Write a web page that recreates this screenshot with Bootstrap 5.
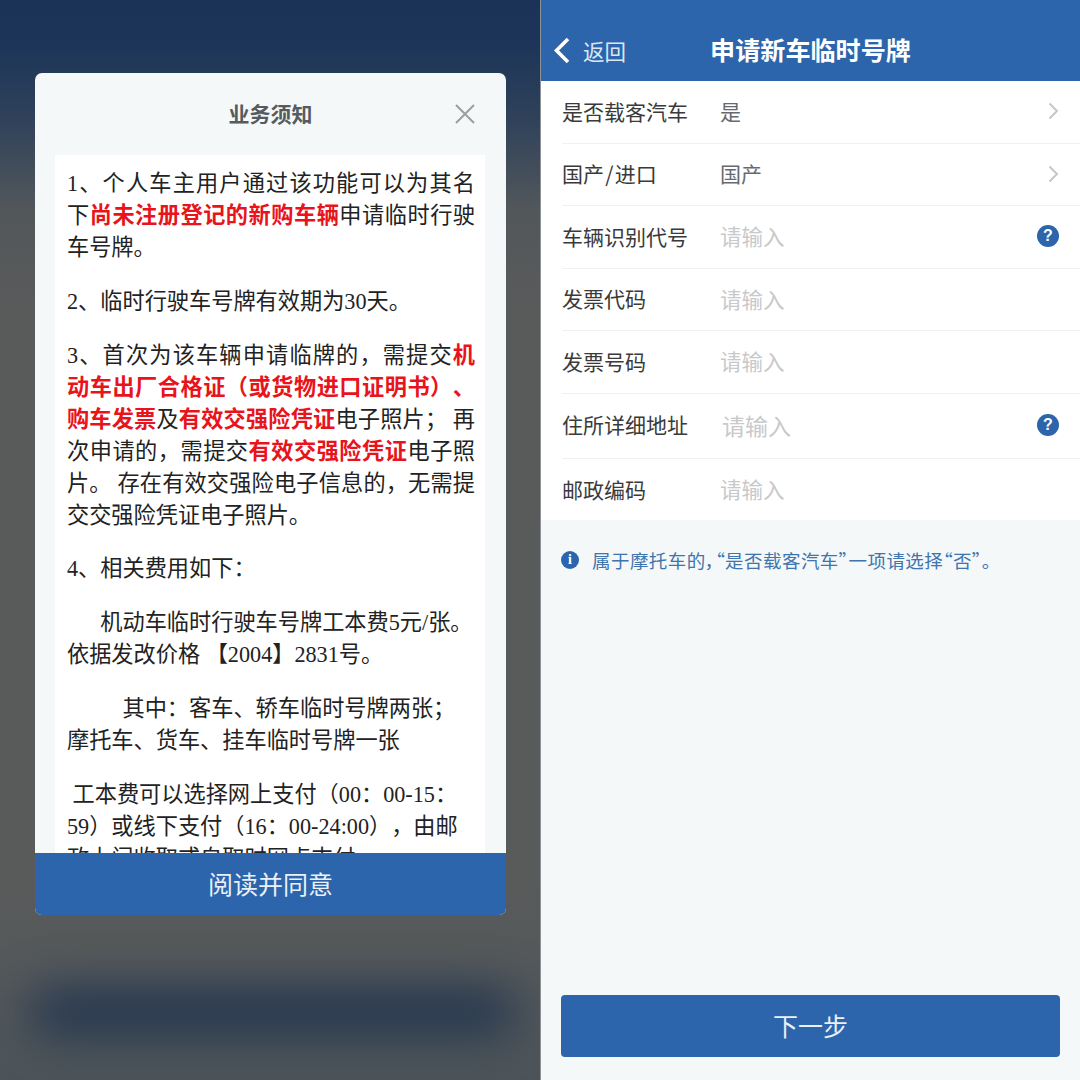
<!DOCTYPE html>
<html lang="zh-CN">
<head>
<meta charset="utf-8">
<title>申请新车临时号牌</title>
<link rel="stylesheet" href="https://cdn.jsdelivr.net/npm/bootstrap@5.3.0/dist/css/bootstrap.min.css">
<style>
html,body{width:1080px;height:1080px;overflow:hidden;background:#5a5a5a;font-family:"Noto Sans CJK SC",sans-serif}
.stage{width:1080px;height:1080px}
.shot-left{width:540px;height:1080px;position:relative;overflow:hidden;background:linear-gradient(180deg,#1a3356 0,#1c3558 45px,#30425a 120px,#52575a 210px,#595a5a 300px,#595a5a 880px,#55595b 960px,#4c5459 1080px)}
.blur-band{position:absolute;left:30px;right:24px;top:990px;height:44px;background:#1f324d;filter:blur(24px);border-radius:20px}
.notice{position:absolute;left:35px;top:73px;width:471px;height:842px;background:#f4f8f9;border-radius:7px;overflow:hidden}
.notice-head{height:82px;position:relative;color:#555b5e;font-size:21px;font-weight:700}
.notice-x{position:absolute;right:31px;top:31px;width:20px;height:20px}
.notice-body{margin:0 21px 0 20px;height:698px;background:#fff;padding:13px 10px 0 12px;overflow:hidden;font-family:"Liberation Serif","Noto Sans CJK SC",serif;font-size:22.2px;line-height:32px;color:#222;white-space:nowrap;text-spacing-trim:space-all}
.notice-body p{margin:0 0 21.8px}
.jl{display:block;text-align:justify;text-align-last:justify;white-space:normal}
.notice-body b{color:#e8131b;font-weight:700}
.agree{height:62px;background:#2c65ab;color:#e9f0f7;font-size:25px}
.divider-v{width:1px;background:#8d9296}
.shot-right{width:539px;height:1080px;background:#f4f8f9}
.app-head{height:81px;background:#2c65ab;color:#fff;position:relative;padding-top:18px}
.app-back{position:absolute;left:12px;top:37px}
.app-back-t{position:absolute;left:42px;top:35px;font-size:21.5px;line-height:32px;color:#dbe6f2}
.app-title{font-size:25.1px;font-weight:700;line-height:64px;margin-top:-1px}
.form-rows{background:#fff;height:439px}
.form-line{height:62.5px;margin-left:21px;border-bottom:1px solid #eef0f1;padding:0 21px 1px 0;font-size:21px;color:#3a3a3a}
.form-line:last-child{border-bottom:0}
.form-line.tall{height:65px}
.lbl{width:158px;flex:none}
.tight-sp{word-spacing:-3.5px}
.val{flex:1;color:#666a6e}
.ph{flex:1;color:#c8c9ca;font-size:21.5px}
.ph.big{font-size:23px;padding-left:2px}
.q-dot{width:22px;height:22px;border-radius:50%;background:#2c65ab;color:#fff;font:700 16px/22px "Liberation Sans",sans-serif;text-align:center;flex:none}
.note{padding:30px 20px 0;color:#3f74ad;font-size:18.5px;line-height:20px;letter-spacing:.45px;font-feature-settings:"palt"}
.i-dot{width:18px;height:18px;border-radius:50%;background:#2c65ab;color:#fff;font:700 14px/18px "Liberation Serif",serif;text-align:center;flex:none;margin-right:13px;letter-spacing:0}
.next-wrap{padding:0 20px;margin-top:auto;margin-bottom:23px}
.next-btn{height:62px;background:#2c65ab;border:0;border-radius:4px;color:#e9f0f7;font-size:25px}
</style>
</head>
<body>
<div class="stage d-flex">
  <div class="shot-left">
    <div class="blur-band"></div>
    <div class="notice d-flex flex-column">
      <div class="notice-head d-flex align-items-center justify-content-center">业务须知
        <svg class="notice-x" viewBox="0 0 20 20"><path d="M1 1 19 19M19 1 1 19" stroke="#9a9fa1" stroke-width="2" fill="none"/></svg>
      </div>
      <div class="notice-body">
        <p><span class="jl">1、个人车主用户通过该功能可以为其名</span><span class="jl">下<b>尚未注册登记的新购车辆</b>申请临时行驶</span>车号牌。</p>
        <p>2、临时行驶车号牌有效期为30天。</p>
        <p><span class="jl">3、首次为该车辆申请临牌的，需提交<b>机</b></span><span class="jl"><b>动车出厂合格证（或货物进口证明书）、</b></span><span class="jl"><b>购车发票</b>及<b>有效交强险凭证</b>电子照片； 再</span><span class="jl">次申请的，需提交<b>有效交强险凭证</b>电子照</span><span class="jl">片。 存在有效交强险电子信息的，无需提</span>交交强险凭证电子照片。</p>
        <p>4、相关费用如下：</p>
        <p>&nbsp;&nbsp;&nbsp;&nbsp;&nbsp;&nbsp;机动车临时行驶车号牌工本费5元/张。<br>依据发改价格 【2004】2831号。</p>
        <p>&nbsp;&nbsp;&nbsp;&nbsp;&nbsp;&nbsp;&nbsp;&nbsp;&nbsp;&nbsp;其中：客车、轿车临时号牌两张；<br>摩托车、货车、挂车临时号牌一张</p>
        <p>&nbsp;工本费可以选择网上支付（00：00-15：<br>59）或线下支付（16：00-24:00），由邮<br>政上门收取或自取时网点支付。</p>
      </div>
      <div class="agree d-flex align-items-center justify-content-center">阅读并同意</div>
    </div>
  </div>
  <div class="divider-v"></div>
  <div class="shot-right d-flex flex-column">
    <div class="app-head text-center">
      <svg class="app-back" width="18" height="28" viewBox="0 0 18 28"><path d="M15 2 3.5 13.5 15 25" stroke="#fff" stroke-width="3.6" fill="none"/></svg>
      <span class="app-back-t">返回</span>
      <div class="app-title">申请新车临时号牌</div>
    </div>
    <div class="form-rows">
      <div class="form-line d-flex align-items-center"><span class="lbl">是否载客汽车</span><span class="val">是</span>
        <svg width="12" height="20" viewBox="0 0 12 20"><path d="M2.5 2.5 10 10 2.5 17.5" stroke="#c4c6c8" stroke-width="2" fill="none"/></svg></div>
      <div class="form-line d-flex align-items-center"><span class="lbl tight-sp">国产 / 进口</span><span class="val">国产</span>
        <svg width="12" height="20" viewBox="0 0 12 20"><path d="M2.5 2.5 10 10 2.5 17.5" stroke="#c4c6c8" stroke-width="2" fill="none"/></svg></div>
      <div class="form-line d-flex align-items-center"><span class="lbl">车辆识别代号</span><span class="ph">请输入</span><span class="q-dot">?</span></div>
      <div class="form-line d-flex align-items-center"><span class="lbl">发票代码</span><span class="ph">请输入</span></div>
      <div class="form-line d-flex align-items-center"><span class="lbl">发票号码</span><span class="ph">请输入</span></div>
      <div class="form-line tall d-flex align-items-center"><span class="lbl">住所详细地址</span><span class="ph big">请输入</span><span class="q-dot">?</span></div>
      <div class="form-line d-flex align-items-center"><span class="lbl">邮政编码</span><span class="ph">请输入</span></div>
    </div>
    <div class="note d-flex align-items-center"><span class="i-dot">i</span><span>属于摩托车的，“是否载客汽车”一项请选择“否”。</span></div>
    <div class="next-wrap"><button type="button" class="btn next-btn w-100">下一步</button></div>
  </div>
</div>
<script src="https://cdn.jsdelivr.net/npm/bootstrap@5.3.0/dist/js/bootstrap.bundle.min.js"></script>
</body>
</html>
